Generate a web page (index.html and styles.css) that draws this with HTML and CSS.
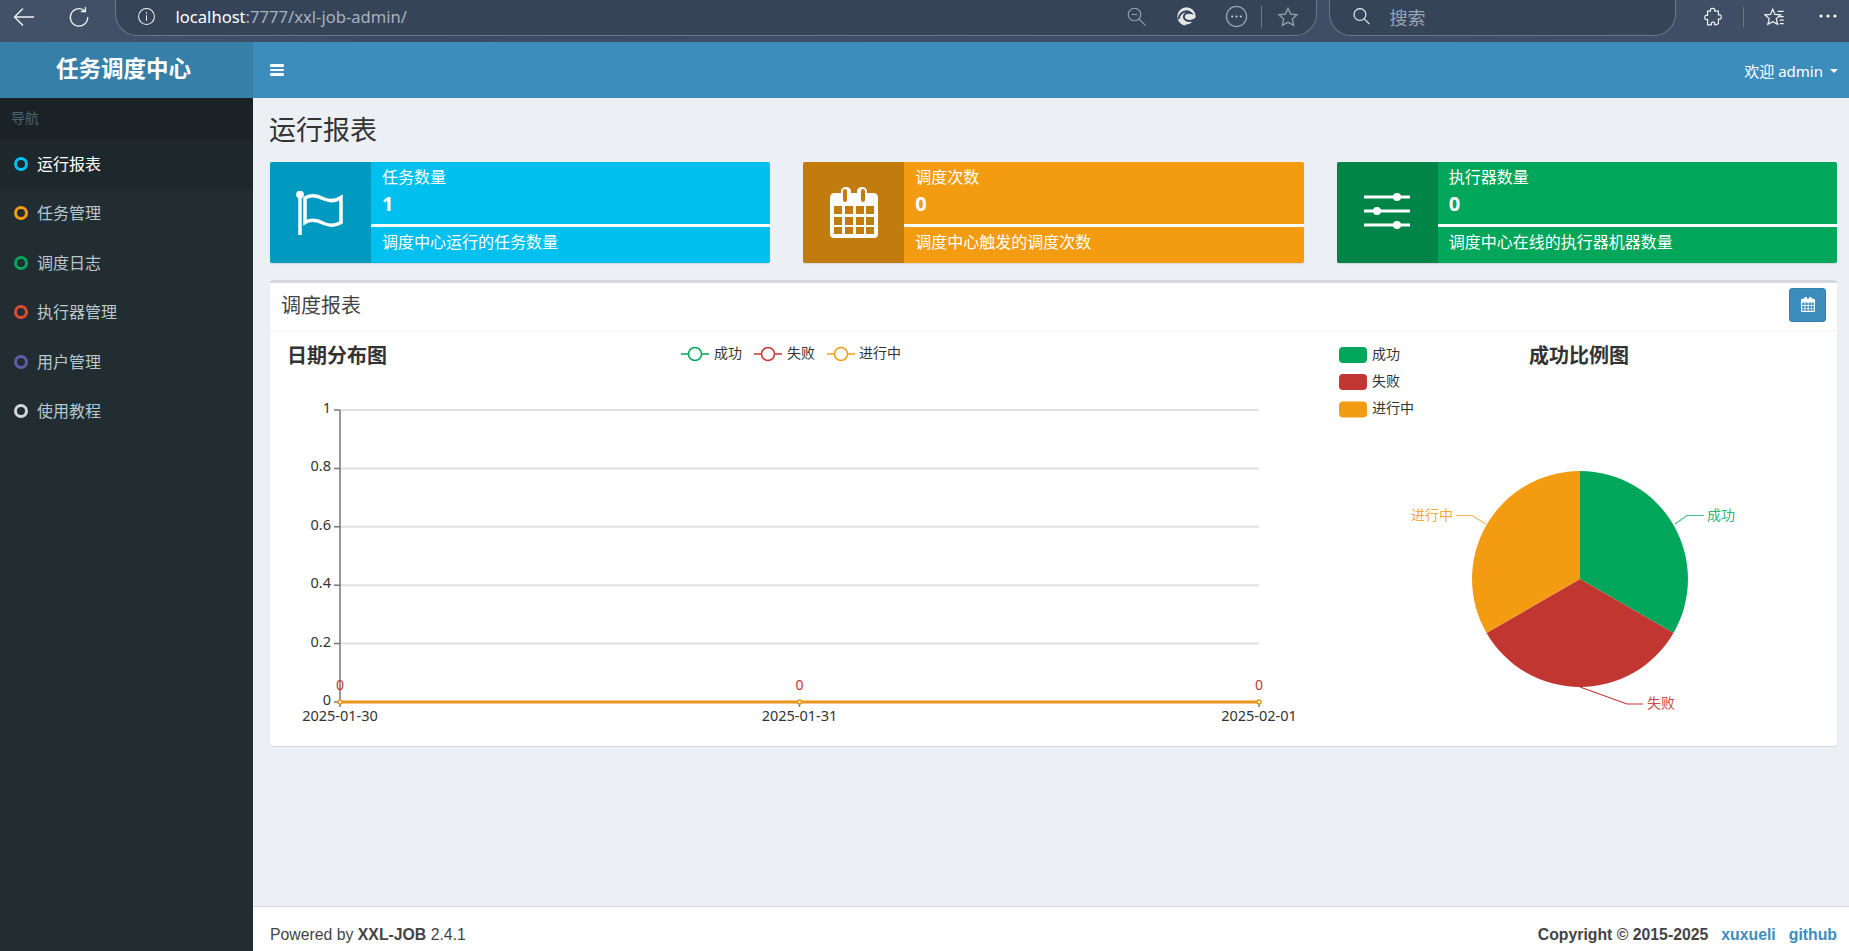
FILE: index.html
```html
<!DOCTYPE html>
<html lang="zh-CN">
<head>
<meta charset="utf-8">
<title>任务调度中心</title>
<link rel="stylesheet" href="styles.css">
</head>
<body>
<div class="chrome">
  <svg class="ic back" viewBox="0 0 24 24"><path d="M22 12H3M11 3.500 2.500 12l8.500 8.500"/></svg>
  <svg class="ic reload" viewBox="0 0 24 24"><path d="M18.500 5.500A9.500 9.500 0 1 0 21.500 12M19 1v5h-5"/></svg>
  <div class="addr">
    <svg class="ic info-i" viewBox="0 0 24 24"><circle cx="12" cy="12" r="10"/><path d="M12 10.500v7M12 6.500v2"/></svg>
    <span class="url"><span class="host">localhost</span>:7777/xxl-job-admin/</span>
    <span class="addr-tools">
      <svg class="ic dim zoomout" viewBox="0 0 24 24"><circle cx="9" cy="9" r="7.500"/><path d="M5.500 9h7M14.500 14.500l7.500 7.500"/></svg>
      <svg class="edge" viewBox="0 0 24 24"><circle cx="12" cy="12" r="10.500" fill="#e6e6e6"/><path d="M3 15C4 6 13 4 17 8c-4-1-8 .5-8 4 0 5 7 7 13 3-2 5-7 8-11 7" fill="none" stroke="#36445a" stroke-width="2.200"/></svg>
      <svg class="ic dim more" viewBox="0 0 24 24"><circle cx="12" cy="12" r="10.500"/><circle class="dot" cx="7.500" cy="12" r="1.100"/><circle class="dot" cx="12" cy="12" r="1.100"/><circle class="dot" cx="16.500" cy="12" r="1.100"/></svg>
      <i class="sep"></i>
      <svg class="ic dim star" viewBox="0 0 24 24"><path d="m12 2.500 2.900 6.300 6.900.8-5.100 4.700 1.400 6.800-6.100-3.400-6.100 3.400 1.400-6.800-5.100-4.700 6.900-.8z"/></svg>
    </span>
  </div>
  <div class="search">
    <svg class="ic find" viewBox="0 0 24 24"><circle cx="10" cy="9.500" r="7.500"/><path d="M15.500 15l6.500 6.500"/></svg>
    <span class="search-text">搜索</span>
  </div>
  <svg class="ic puzzle" viewBox="0 0 24 24"><path d="M9 2.500c1-1.200 4-1.200 5 0 .5 1-.5 2 0 2.500h4.500v4.500c.7.500 1.500-.5 2.500 0 1.200 1 1.200 4 0 5-1 .5-1.800-.5-2.500 0V20c-1.500 1.500-3.500 1.500-4.500 1.500-.5-.7.500-1.500 0-2.500-1-1.200-3-1.200-4 0-.5 1 .5 1.800 0 2.500H5.500V15c-.7-.5-1.500.5-2.500 0-1.200-1-1.200-4 0-5 1-.5 1.800.5 2.500 0V5H9c.5-.5-.5-1.500 0-2.500z"/></svg>
  <i class="sep wide"></i>
  <svg class="ic favs" viewBox="0 0 24 24"><path d="M10 2.500l2.500 6 6.500.5-5 4.300 1.600 6.500L10 16.800l-5.600 3 1.600-6.500L1 9l6.500-.5zM15.500 5h7M18 11h4.500M18 15h4.500M18 19h4.500"/></svg>
  <svg class="menu-dots" viewBox="0 0 18 4"><circle cx="2" cy="2" r="1.600"/><circle cx="9" cy="2" r="1.600"/><circle cx="16" cy="2" r="1.600"/></svg>
</div>

<div class="app">
  <aside class="left">
    <div class="logo">任务调度中心</div>
    <nav class="side">
      <div class="side-head">导航</div>
      <a class="side-item active"><i class="ring aqua"></i>运行报表</a>
      <a class="side-item"><i class="ring yellow"></i>任务管理</a>
      <a class="side-item"><i class="ring green"></i>调度日志</a>
      <a class="side-item"><i class="ring red"></i>执行器管理</a>
      <a class="side-item"><i class="ring purple"></i>用户管理</a>
      <a class="side-item"><i class="ring gray"></i>使用教程</a>
    </nav>
  </aside>

  <div class="right">
    <header class="navbar">
      <span class="bars"><i></i><i></i><i></i></span>
      <span class="user">欢迎 admin<i class="caret"></i></span>
    </header>

    <main class="content">
      <h1 class="page-title">运行报表</h1>
      <section class="boxes">
        <div class="info bg-aqua">
          <div class="info-icon">
            <svg class="flag" viewBox="0 0 50 44"><circle cx="4" cy="3.500" r="3.500" fill="#fff"/><path d="M4 4v40" stroke-width="3.500"/><path d="M9 7c6-4 13-2 19 1 6 2.500 12 2 17-1.500v25c-5 3-11 3.500-17 1-6-3-13-5-19-1z" stroke-width="3.500"/></svg>
          </div>
          <div class="info-body">
            <div class="info-main"><div class="info-label">任务数量</div><div class="info-num">1</div></div>
            <div class="info-desc">调度中心运行的任务数量</div>
          </div>
        </div>
        <div class="info bg-yellow">
          <div class="info-icon">
            <svg class="cal" viewBox="0 0 48 51"><path class="solid" fill-rule="evenodd" d="M5 6h6V4a5 4 0 0 1 10 0v2h6V4a5 4 0 0 1 10 0v2h6q5 0 5 5v36q0 4-4 4H4q-4 0-4-4V11q0-5 5-5zM13 4v9a2 2 0 0 0 4 0V4a2 2 0 0 0-4 0zM31 4v9a2 2 0 0 0 4 0V4a2 2 0 0 0-4 0zM4 19v8h8v-8zM15 19v8h8v-8zM26 19v8h8v-8zM36 19v8h8v-8zM4 30v8h8v-8zM15 30v8h8v-8zM26 30v8h8v-8zM36 30v8h8v-8zM4 40v7h8v-7zM15 40v7h8v-7zM26 40v7h8v-7zM36 40v7h8v-7z"/></svg>
          </div>
          <div class="info-body">
            <div class="info-main"><div class="info-label">调度次数</div><div class="info-num">0</div></div>
            <div class="info-desc">调度中心触发的调度次数</div>
          </div>
        </div>
        <div class="info bg-green">
          <div class="info-icon">
            <svg class="sliders" viewBox="0 0 46 36"><path d="M0 4h46M0 18h46M0 32h46" stroke-width="3"/><circle class="solid" cx="33" cy="4" r="4"/><circle class="solid" cx="13" cy="18" r="4"/><circle class="solid" cx="33" cy="32" r="4"/></svg>
          </div>
          <div class="info-body">
            <div class="info-main"><div class="info-label">执行器数量</div><div class="info-num">0</div></div>
            <div class="info-desc">调度中心在线的执行器机器数量</div>
          </div>
        </div>
      </section>

      <section class="card">
        <div class="card-head">
          <h3 class="card-title">调度报表</h3>
          <button class="date-btn"><svg class="cal-sm" viewBox="0 0 48 51"><path class="solid" fill-rule="evenodd" d="M5 6h6V4a5 4 0 0 1 10 0v2h6V4a5 4 0 0 1 10 0v2h6q5 0 5 5v36q0 4-4 4H4q-4 0-4-4V11q0-5 5-5zM4 19v8h8v-8zM15 19v8h8v-8zM26 19v8h8v-8zM36 19v8h8v-8zM4 30v8h8v-8zM15 30v8h8v-8zM26 30v8h8v-8zM36 30v8h8v-8zM4 40v7h8v-7zM15 40v7h8v-7zM26 40v7h8v-7zM36 40v7h8v-7z"/></svg></button>
        </div>
        <div class="card-body">
          <svg class="line-chart" viewBox="270 331 1060 415">
            <text class="c-title" x="287" y="362.500">日期分布图</text>
            <g class="legend-line">
              <path stroke="#00a65a" d="M681 354h28"/><circle stroke="#00a65a" cx="695" cy="354" r="6.500"/>
              <path stroke="#c23632" d="M754 354h28"/><circle stroke="#c23632" cx="768" cy="354" r="6.500"/>
              <path stroke="#f39c12" d="M827 354h28"/><circle stroke="#f39c12" cx="841" cy="354" r="6.500"/>
            </g>
            <text class="c-text" x="714" y="358">成功</text>
            <text class="c-text" x="787" y="358">失败</text>
            <text class="c-text" x="859" y="358">进行中</text>

            <path class="grid" d="M340 410h919M340 468.400h919M340 526.800h919M340 585.200h919M340 643.600h919"/>
            <path class="axis" d="M340 410v297M334 410h6M334 468.400h6M334 526.800h6M334 585.200h6M334 643.600h6M334 702h6M799.500 702v5M1259 702v5"/>
            <text class="c-axis end" x="331" y="412.500">1</text>
            <text class="c-axis end" x="331" y="471">0.8</text>
            <text class="c-axis end" x="331" y="530">0.6</text>
            <text class="c-axis end" x="331" y="588">0.4</text>
            <text class="c-axis end" x="331" y="647">0.2</text>
            <text class="c-axis end" x="331" y="705">0</text>
            <text class="c-axis mid" x="340" y="721">2025-01-30</text>
            <text class="c-axis mid" x="799.500" y="721">2025-01-31</text>
            <text class="c-axis mid" x="1259" y="721">2025-02-01</text>
            <text class="c-val mid" x="340" y="690">0</text>
            <text class="c-val mid" x="799.500" y="690">0</text>
            <text class="c-val mid" x="1259" y="690">0</text>
            <path class="series" d="M340 702h919"/>
            <circle class="pt" cx="340" cy="702" r="2"/><circle class="pt" cx="799.500" cy="702" r="2"/><circle class="pt" cx="1259" cy="702" r="2"/>
          </svg>
          <svg class="pie-chart" viewBox="1330 331 507 415">
            <rect x="1339" y="347" width="28" height="16" rx="4" fill="#00a65a"/>
            <rect x="1339" y="374" width="28" height="16" rx="4" fill="#c23632"/>
            <rect x="1339" y="401.500" width="28" height="16" rx="4" fill="#f39c12"/>
            <text class="c-text" x="1372" y="359">成功</text>
            <text class="c-text" x="1372" y="386">失败</text>
            <text class="c-text" x="1372" y="413">进行中</text>
            <text class="c-title" x="1529" y="362.500">成功比例图</text>
            <path fill="#00a65a" d="M1580 579V471A108 108 0 0 1 1673.500 633Z"/>
            <path fill="#c23632" d="M1580 579L1673.500 633A108 108 0 0 1 1486.500 633Z"/>
            <path fill="#f39c12" d="M1580 579L1486.500 633A108 108 0 0 1 1580 471Z"/>
            <path class="lead" stroke="#4cc18c" d="M1675 524l12-8.500h17"/>
            <path class="lead" stroke="#c23632" d="M1580 687l47 17h16"/>
            <path class="lead" stroke="#f7b955" d="M1486 524l-14-8.500h-16"/>
            <text class="c-text lbl-green" x="1707" y="520">成功</text>
            <text class="c-text lbl-red" x="1647" y="708">失败</text>
            <text class="c-text lbl-orange" x="1411" y="520">进行中</text>
          </svg>
        </div>
      </section>
    </main>

    <footer class="footer">
      <span>Powered by <b>XXL-JOB</b> 2.4.1</span>
      <span class="foot-right"><b>Copyright © 2015-2025</b><a class="foot-link">xuxueli</a><a class="foot-link">github</a></span>
    </footer>
  </div>
</div>
</body>
</html>
```

FILE: styles.css
```css
* { box-sizing: border-box; }
html, body { margin: 0; height: 100%; overflow: hidden; }
body {
  font-family: "Noto Sans", "Noto Sans CJK SC", sans-serif;
  font-size: 14px;
  color: #333;
  background: #ecf0f5;
  display: flex;
  flex-direction: column;
}
h1, h3 { margin: 0; font-weight: 400; }

/* browser chrome */
.chrome {
  height: 42px;
  flex: none;
  display: flex;
  align-items: flex-start;
  background: linear-gradient(90deg, #445269, #3d4c63 20%, #414f66);
  color: #fff;
}
.ic { fill: none; stroke: #f2f2f2; stroke-width: 1.400; flex: none; }
.back { width: 24px; height: 24px; margin: 5px 0 0 12px; }
.reload { width: 22px; height: 22px; margin: 6px 0 0 32px; }
.addr {
  width: 1202px;
  height: 36px;
  margin: 0 0 0 24.500px;
  padding: 0 17px 2px 21px;
  display: flex;
  align-items: center;
  background: #36445a;
  border: 1px solid #6c7888;
  border-top: 0;
  border-radius: 0 0 22px 22px;
}
.info-i { width: 19px; height: 19px; stroke-width: 1.300; }
.url { margin-left: 20px; font-size: 16.600px; color: #a9b1bc; white-space: nowrap; flex: 1; }
.host { color: #fff; }
.addr-tools { display: flex; align-items: center; }
.dim { stroke: #9aa2ae; }
.zoomout { width: 20px; height: 20px; }
.edge { width: 21px; height: 21px; margin-left: 29px; flex: none; }
.more { width: 23px; height: 23px; margin-left: 28px; }
.more .dot { fill: #c9ced6; stroke: none; }
.sep { display: block; width: 1px; height: 22px; background: #6c7888; flex: none; }
.addr-tools .sep { margin-left: 13px; }
.star { width: 22px; height: 22px; margin-left: 15px; }
.search {
  width: 347px;
  height: 36px;
  margin-left: 12px;
  padding: 0 0 2px 22px;
  display: flex;
  align-items: center;
  background: #36445a;
  border: 1px solid #6c7888;
  border-top: 0;
  border-radius: 0 0 22px 22px;
}
.find { width: 19px; height: 19px; }
.search-text { margin-left: 19px; font-size: 18px; color: #9aa3af; }
.puzzle { width: 20px; height: 22px; margin: 6px 0 0 27.500px; }
.sep.wide { margin: 7px 0 0 20px; height: 20px; }
.favs { width: 21px; height: 21px; margin: 7px 0 0 19.500px; }
.menu-dots { width: 18px; height: 4px; margin: 14px 0 0 34.500px; fill: #fff; flex: none; }

/* app shell */
.app { flex: 1; min-height: 0; display: flex; }
.left { width: 253px; flex: none; display: flex; flex-direction: column; background: #222d32; }
.logo {
  height: 56px;
  flex: none;
  padding-right: 6px;
  background: #367fa9;
  color: #fff;
  font-size: 22.500px;
  font-weight: 700;
  line-height: 54px;
  text-align: center;
}
.side-head {
  height: 41px;
  padding-left: 11px;
  background: #1a2226;
  color: #4b646f;
  font-size: 14px;
  line-height: 40px;
}
.side-item {
  height: 49.500px;
  display: flex;
  align-items: center;
  padding-left: 14px;
  color: #b8c7ce;
  font-size: 16px;
  line-height: 20px;
}
.side-item.active { background: #1e282c; color: #fff; }
.ring { width: 14px; height: 14px; margin-right: 9px; border: 3px solid; border-radius: 50%; flex: none; }
.aqua { border-color: #00c0ef; }
.yellow { border-color: #f39c12; }
.green { border-color: #00a65a; }
.red { border-color: #dd4b39; }
.purple { border-color: #605ca8; }
.gray { border-color: #d2d6de; }

.right { flex: 1; min-width: 0; display: flex; flex-direction: column; }
.navbar {
  height: 56px;
  flex: none;
  display: flex;
  align-items: center;
  justify-content: space-between;
  padding: 0 11px 0 17px;
  background: #3c8dbc;
  color: #fff;
}
.bars { display: flex; flex-direction: column; gap: 2px; width: 14px; }
.bars i { display: block; height: 2.500px; background: #fff; border-radius: 1px; }
.user { display: flex; align-items: center; font-size: 15px; }
.caret { margin: 2px 0 0 7px; border-top: 4px solid #fff; border-left: 4px solid transparent; border-right: 4px solid transparent; }

.content { flex: 1; min-height: 0; padding: 0 12px 0 17px; }
.page-title { height: 64px; font-size: 27px; line-height: 63px; color: #333; margin-left: -1px; }
.boxes { display: grid; grid-template-columns: repeat(3, 1fr); gap: 33px; }
.info { display: flex; height: 101px; border-radius: 2px; color: #fff; overflow: hidden; box-shadow: 0 1px 1px rgba(0,0,0,.1); }
.bg-aqua { background: #00c0ef; }
.bg-yellow { background: #f39c12; }
.bg-green { background: #00a65a; }
.info-icon {
  width: 101px;
  flex: none;
  display: flex;
  align-items: center;
  justify-content: center;
  background: rgba(0,0,0,.2);
}
.info-icon svg { fill: none; stroke: #fff; }
.info-icon svg .solid { fill: #fff; stroke: none; }
.flag { width: 50px; height: 44px; }
.cal { width: 48px; height: 51px; }
.sliders { width: 46px; height: 36px; margin-bottom: 4px; }
.info-body { flex: 1; min-width: 0; display: flex; flex-direction: column; }
.info-main { height: 65px; padding: 5px 11px 0; border-bottom: 3px solid #fff; }
.info-label { font-size: 16px; line-height: 20px; }
.info-num { margin-top: 4px; font-size: 20px; font-weight: 700; line-height: 26px; }
.info-desc { padding: 2px 11px 0; font-size: 16px; line-height: 26px; }

.card {
  margin-top: 17px;
  height: 466px;
  background: #fff;
  border-top: 3px solid #d2d6de;
  border-radius: 3px;
  box-shadow: 0 1px 1px rgba(0,0,0,.1);
  display: flex;
  flex-direction: column;
}
.card-head {
  height: 48px;
  flex: none;
  display: flex;
  align-items: center;
  justify-content: space-between;
  padding: 0 11px 4px;
  border-bottom: 1px solid #f4f4f4;
}
.card-title { font-size: 20px; color: #444; }
.date-btn {
  width: 37px;
  height: 34px;
  padding: 0;
  display: flex;
  align-items: center;
  justify-content: center;
  background: #3c8dbc;
  border: 1px solid #367fa9;
  border-radius: 3px;
}
.cal-sm { width: 14px; height: 15px; }
.cal-sm .solid { fill: #fff; }
.card-body { flex: 1; display: flex; min-height: 0; }
.line-chart { width: 1060px; height: 415px; flex: none; }
.pie-chart { width: 507px; height: 415px; flex: none; }

.c-title { font-size: 20px; font-weight: 700; fill: #333; }
.c-text { font-size: 14px; fill: #333; }
.lbl-green { fill: #2db57a; }
.lbl-red { fill: #cc4a46; }
.lbl-orange { fill: #f5a93a; }
.c-axis { font-size: 14.500px; fill: #333; }
.c-val { font-size: 14px; fill: #c23632; }
.end { text-anchor: end; }
.mid { text-anchor: middle; }
.legend-line path, .legend-line circle { stroke-width: 1.500; }
.legend-line circle { fill: #fff; }
.grid { stroke: #e0e0e0; stroke-width: 2; fill: none; }
.axis { stroke: #777; stroke-width: 1.500; fill: none; }
.series { stroke: #e8961c; stroke-width: 3; fill: none; }
.pt { fill: #fff; stroke: #e8961c; stroke-width: 1.500; }
.lead { fill: none; stroke-width: 1.200; }

.footer {
  height: 45px;
  flex: none;
  display: flex;
  justify-content: space-between;
  padding: 18px 12px 0 17px;
  background: #fff;
  border-top: 1px solid #d2d6de;
  font-family: "Liberation Sans", sans-serif;
  font-size: 15.800px;
  line-height: 20px;
  color: #444;
}
.foot-link { margin-left: 13px; font-weight: 700; color: #3c8dbc; }
```
